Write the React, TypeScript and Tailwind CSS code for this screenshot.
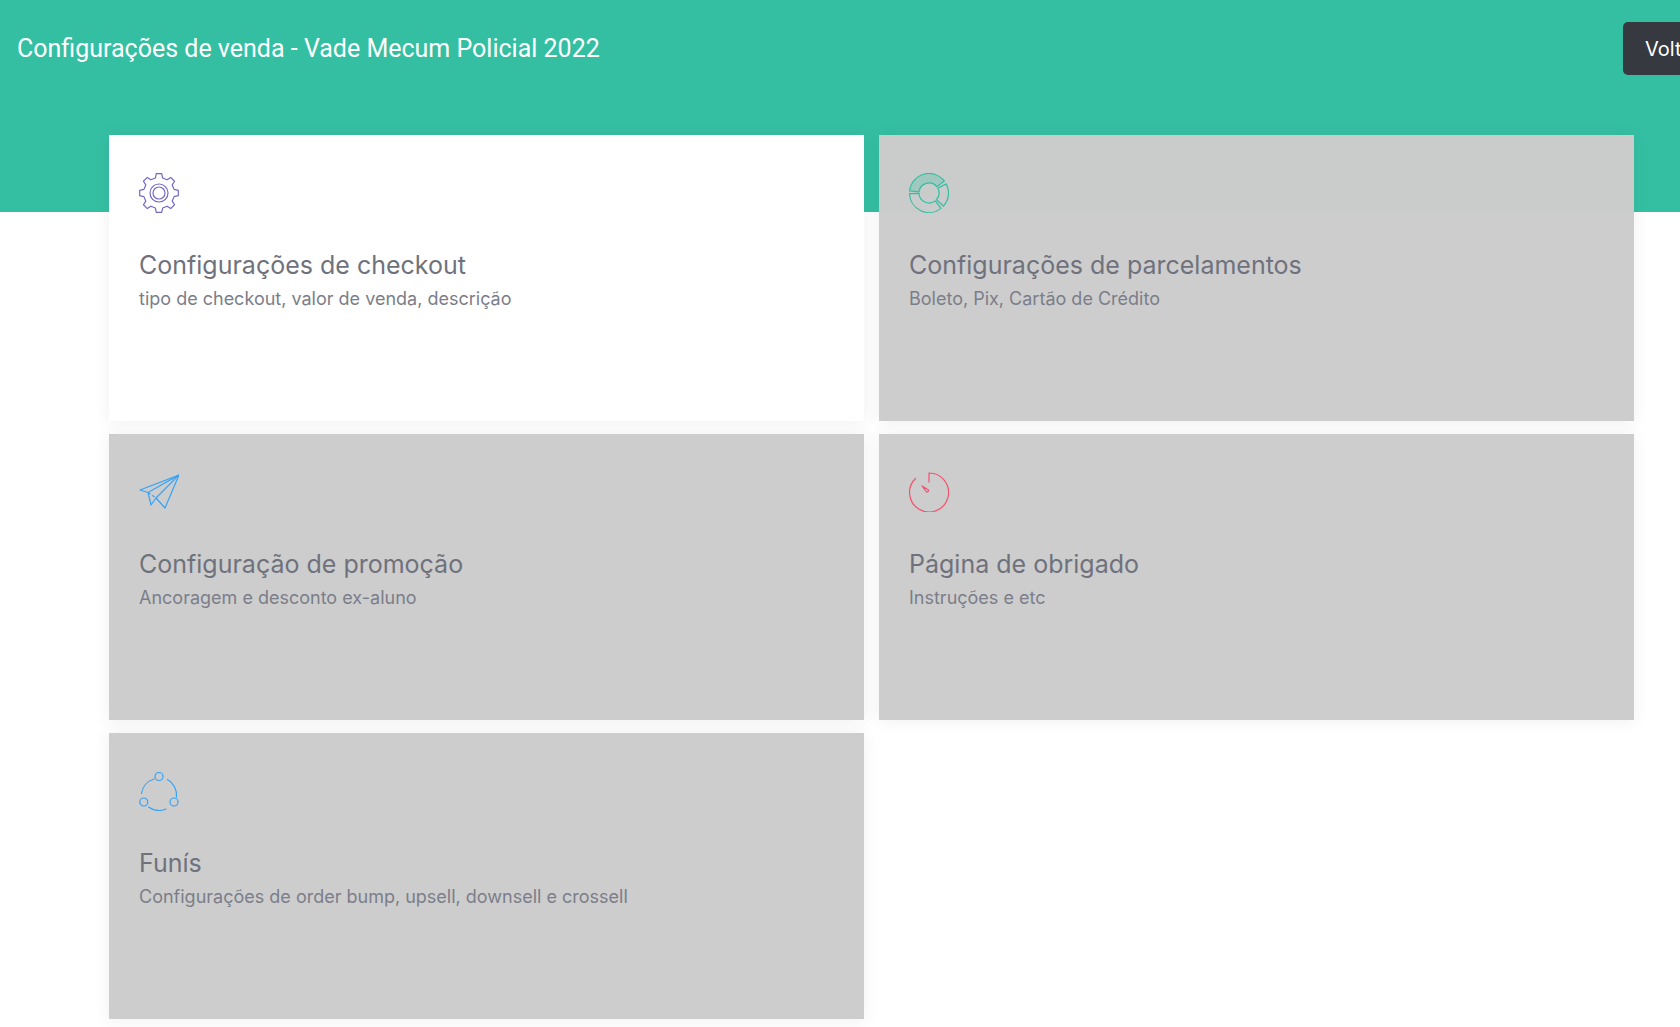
// App.tsx
const FONT_BODY = "font-['Inter','Liberation_Sans',sans-serif]";

const polar = (cx: number, cy: number, r: number, deg: number) => {
  const a = (deg * Math.PI) / 180;
  return `${(cx + r * Math.cos(a)).toFixed(2)} ${(cy + r * Math.sin(a)).toFixed(2)}`;
};

// ring segment between two angles
const sector = (from: number, to: number, outer = 19.5, inner = 10) =>
  `M${polar(20, 20, outer, from)} A${outer} ${outer} 0 ${to - from > 180 ? 1 : 0} 1 ${polar(20, 20, outer, to)} L${polar(20, 20, inner, to)} A${inner} ${inner} 0 ${to - from > 180 ? 1 : 0} 0 ${polar(20, 20, inner, from)} Z`;

const gearPath = () => {
  const pts: string[] = [];
  for (let i = 0; i < 8; i++) {
    const mid = i * 45 - 90;
    pts.push(polar(20, 20, 15.5, mid - 13.5));
    pts.push(polar(20, 20, 19.5, mid - 8));
    pts.push(polar(20, 20, 19.5, mid + 8));
    pts.push(polar(20, 20, 15.5, mid + 13.5));
  }
  return `M${pts.join(" L")} Z`;
};

function GearIcon() {
  return (
    <svg width="40" height="40" viewBox="0 0 40 40" fill="none" stroke="#716aca" strokeWidth="1.2" strokeLinejoin="round">
      <path d={gearPath()} />
      <circle cx="20" cy="20" r="9" />
      <circle cx="20" cy="20" r="6" />
    </svg>
  );
}

function DonutIcon() {
  return (
    <svg width="40" height="40" viewBox="0 0 40 40" fill="none" stroke="#34bfa3" strokeWidth="1.2" strokeLinejoin="round">
      <path d={sector(-174, -38)} fill="#34bfa3" fillOpacity="0.28" />
      <path d={sector(-28, 42)} />
      <path d={sector(52, 178)} />
    </svg>
  );
}

function PlaneIcon() {
  return (
    <svg width="40" height="40" viewBox="0 0 40 40" fill="none" stroke="#36a3f7" strokeWidth="1.2" strokeLinejoin="round">
      <path d="M40 3 L1 18 L9 20.5 L12 33 L17 26 L26 36 Z" />
      <path d="M40 3 L9 20.5" />
      <path d="M40 3 L17 26" />
      <path d="M9 20.5 L17 26" strokeDasharray="3 2" />
    </svg>
  );
}

function ClockIcon() {
  return (
    <svg width="40" height="40" viewBox="0 0 40 40" fill="none" stroke="#f4516c" strokeWidth="1.2" strokeLinecap="round" strokeLinejoin="round">
      <path d="M20 10 V1 A19.5 19.5 0 1 1 6.5 6.5" />
      <path d="M13 14 L19.5 18 A2 2 0 0 1 17.5 20 Z" />
    </svg>
  );
}

function ShareIcon() {
  return (
    <svg width="40" height="40" viewBox="0 0 40 40" fill="none" stroke="#36a3f7" strokeWidth="1.2" strokeLinecap="round">
      <circle cx="20" cy="5.5" r="4" />
      <circle cx="4.8" cy="31" r="4" />
      <circle cx="35" cy="31" r="4" />
      <path d="M15 8 A18 18 0 0 0 2.5 22.5" />
      <path d="M28.5 8.5 A18 18 0 0 1 37.5 26" />
      <path d="M9.5 36 A18 18 0 0 0 27 38" />
    </svg>
  );
}

const cards = [
  { icon: <GearIcon />, title: "Configurações de checkout", text: "tipo de checkout, valor de venda, descrição", active: true },
  { icon: <DonutIcon />, title: "Configurações de parcelamentos", text: "Boleto, Pix, Cartão de Crédito" },
  { icon: <PlaneIcon />, title: "Configuração de promoção", text: "Ancoragem e desconto ex-aluno" },
  { icon: <ClockIcon />, title: "Página de obrigado", text: "Instruções e etc" },
  { icon: <ShareIcon />, title: "Funís", text: "Configurações de order bump, upsell, downsell e crossell" },
];

export default function App() {
  return (
    <div className={`h-screen w-screen overflow-hidden bg-white ${FONT_BODY}`}>
      <header className="flex h-[212px] items-start justify-between bg-[#34bfa3] pl-[17px] pt-[22px]">
        <h1 className="flex h-[53px] items-center whitespace-nowrap font-['Roboto',sans-serif] text-[25px] font-normal text-white">
          Configurações de venda - Vade Mecum Policial 2022
        </h1>
        <button className="-mr-[60px] h-[53px] w-[117px] shrink-0 rounded-[5px] bg-[#36393f] pl-[22px] text-left text-[20px] text-white">
          Voltar
        </button>
      </header>

      <div className="-mt-[77px] grid grid-cols-[755px_755px] gap-x-[15px] gap-y-[13px] pl-[109px]">
        {cards.map((card) => (
          <div
            key={card.title}
            className={`h-[286px] px-[30px] pt-[38px] shadow-[0_1px_15px_rgba(69,65,78,0.08)] ${
              card.active ? "bg-white" : "bg-[#cccccc]/[0.98]"
            }`}
          >
            <div className="h-10 w-10">{card.icon}</div>
            <h3 className="mt-[34px] text-[25px] leading-[36px] font-normal text-[#6f727d]">{card.title}</h3>
            <p className="mt-[3px] text-[18px] leading-[26px] text-[#7b7e8a]">{card.text}</p>
          </div>
        ))}
      </div>
    </div>
  );
}
